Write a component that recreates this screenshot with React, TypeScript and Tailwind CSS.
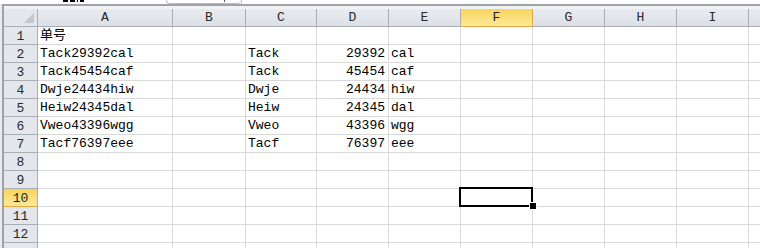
import React from "react";

type Col = { key: string; w: number; label: string };

const cols: Col[] = [
  { key: "A", w: 135, label: "A" },
  { key: "B", w: 73, label: "B" },
  { key: "C", w: 71, label: "C" },
  { key: "D", w: 72, label: "D" },
  { key: "E", w: 72, label: "E" },
  { key: "F", w: 72, label: "F" },
  { key: "G", w: 72, label: "G" },
  { key: "H", w: 72, label: "H" },
  { key: "I", w: 72, label: "I" },
  { key: "J", w: 40, label: "" }, // only the edge shows
];

// A..E values, number in D is right aligned
const data: string[][] = [
  ["单号", "", "", "", ""],
  ["Tack29392cal", "", "Tack", "29392", "cal"],
  ["Tack45454caf", "", "Tack", "45454", "caf"],
  ["Dwje24434hiw", "", "Dwje", "24434", "hiw"],
  ["Heiw24345dal", "", "Heiw", "24345", "dal"],
  ["Vweo43396wgg", "", "Vweo", "43396", "wgg"],
  ["Tacf76397eee", "", "Tacf", "76397", "eee"],
];

const ROWS = 13;
const activeCol = "F";
const activeRow = 10;

function ColHeader({ col }: { col: Col }) {
  const active = col.key === activeCol;
  return (
    <div
      style={{ width: col.w }}
      className={`h-[18px] shrink-0 flex items-center justify-center border-b border-r text-[13px] leading-none ${
        active
          ? "bg-gradient-to-b from-[#f8d45c] to-[#fde995] border-[#e2a53f] text-[#222]"
          : "bg-gradient-to-b from-[#e8ebef] to-[#dcdfe4] border-[#a9aeb5] text-[#2a2a2a]"
      }`}
    >
      {col.label}
    </div>
  );
}

function RowHeader({ n, last }: { n: number; last: boolean }) {
  const active = n === activeRow;
  return (
    <div
      className={`w-[34px] h-[18px] shrink-0 flex items-end justify-center pb-[1px] border-b border-r text-[13px] leading-none ${
        active
          ? "bg-gradient-to-b from-[#f8d45c] to-[#fde995] border-[#e2a53f] text-[#222]"
          : "bg-[#e3e6ea] border-[#a9aeb5] text-[#2a2a2a]"
      }`}
    >
      {last ? "" : n}
    </div>
  );
}

export default function App() {
  return (
    <div
      className="relative w-[760px] h-[248px] overflow-hidden bg-white text-black"
      style={{ fontFamily: '"Liberation Mono", "Noto Sans CJK SC", monospace' }}
    >
      {/* bottom edge of the formula bar */}
      <div className="h-[4px] flex bg-white">
        <div className="w-[63px]" />
        <div className="flex gap-[2px] items-start">
          <div className="w-[5px] h-[2px] bg-black" />
          <div className="w-[5px] h-[2px] bg-black" />
          <div className="w-[1px] h-[2px] bg-black" />
          <div className="w-[4px] h-[2px] bg-black" />
        </div>
        <div className="w-[82px]" />
        <div className="w-[75px] h-[4px] border-b border-l border-[#b9bdc3] rounded-bl-[6px] rounded-br-[6px] flex justify-end pr-[16px]">
          <div className="w-[1px] h-[2px] bg-[#555]" />
        </div>
        <div className="w-[1px] h-[4px] bg-[#c4c7cc]" />
      </div>

      <div className="flex">
        <div className="w-[2px] shrink-0 bg-[#e9ebee] h-[244px]" />
        <div className="flex-1 border-l-2 border-t-2 border-[#9ea3aa]">
          <div className="h-[3px] bg-[#f1f2f4]" />

          {/* column headers */}
          <div className="flex">
            <div className="w-[34px] h-[18px] shrink-0 bg-[#e3e6ea] border-b border-r border-[#a9aeb5] flex items-end justify-end pr-[3px] pb-[3px]">
              <div className="w-0 h-0 border-l-[10px] border-b-[10px] border-l-transparent border-b-[#c3c7cc]" />
            </div>
            {cols.map((c) => (
              <ColHeader key={c.key} col={c} />
            ))}
          </div>

          {/* rows */}
          {Array.from({ length: ROWS }, (_, i) => {
            const n = i + 1;
            const vals = data[i] ?? [];
            return (
              <div key={n} className="flex">
                <RowHeader n={n} last={n === ROWS} />
                {cols.map((c, ci) => {
                  const v = vals[ci] ?? "";
                  const right = ci === 3;
                  return (
                    <div
                      key={c.key}
                      style={{ width: c.w }}
                      className={`h-[18px] shrink-0 border-b border-r border-[#d9d9d9] flex items-end pb-[1px] text-[13px] leading-[15px] whitespace-nowrap ${
                        right ? "justify-end pr-[3px]" : "pl-[2px]"
                      }`}
                    >
                      {v}
                    </div>
                  );
                })}
              </div>
            );
          })}
        </div>
      </div>

      {/* active cell F10 */}
      <div className="absolute left-[459px] top-[187px] w-[74px] h-[20px] border-2 border-black" />
      <div className="absolute left-[530px] top-[203px] w-[6px] h-[6px] bg-black outline outline-1 outline-white" />
    </div>
  );
}
